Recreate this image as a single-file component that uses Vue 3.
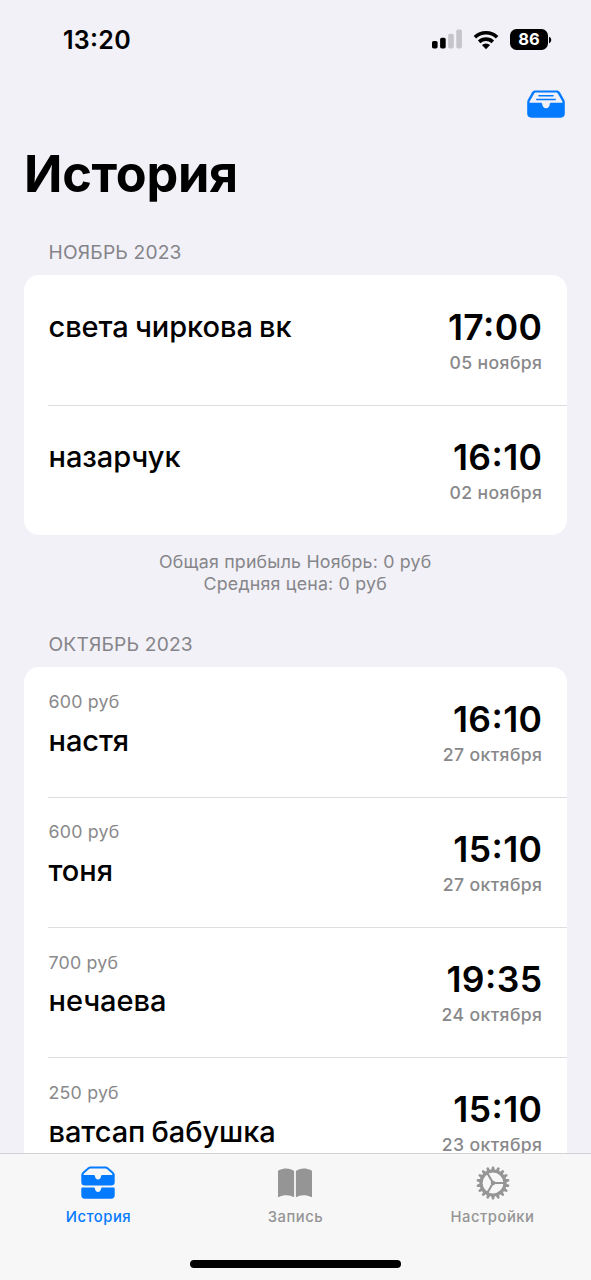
<script setup>
const sections = [
  {
    title: 'НОЯБРЬ 2023',
    rows: [
      { name: 'света чиркова вк', time: '17:00', date: '05 ноября' },
      { name: 'назарчук', time: '16:10', date: '02 ноября' },
    ],
    footer: ['Общая прибыль Ноябрь: 0 руб', 'Средняя цена: 0 руб'],
  },
  {
    title: 'ОКТЯБРЬ 2023',
    rows: [
      { price: '600 руб', name: 'настя', time: '16:10', date: '27 октября' },
      { price: '600 руб', name: 'тоня', time: '15:10', date: '27 октября' },
      { price: '700 руб', name: 'нечаева', time: '19:35', date: '24 октября' },
      { price: '250 руб', name: 'ватсап бабушка', time: '15:10', date: '23 октября' },
    ],
  },
]
const teeth = Array.from({ length: 18 }, (_, i) => i * 20)
</script>

<template>
  <div class="screen">
    <header class="status">
      <div class="clock">13:20</div>
      <div class="indicators">
        <svg class="signal" width="30" height="20" viewBox="0 0 30 20">
          <rect x="0" y="12" width="5.6" height="7.4" rx="1.6" />
          <rect x="8.1" y="8.8" width="5.6" height="10.6" rx="1.6" />
          <rect class="dim" x="16.2" y="4.7" width="5.6" height="14.7" rx="1.6" />
          <rect class="dim" x="24.3" y="0.6" width="5.6" height="18.8" rx="1.6" />
        </svg>
        <svg class="wifi" width="26" height="20" viewBox="0 0 26 20">
          <path class="arc" d="M1.9 7.3 A15.8 15.8 0 0 1 24.1 7.3" />
          <path class="arc" d="M6.2 11.9 A9.7 9.7 0 0 1 19.8 11.9" />
          <path d="M13 19.2 L8.9 15.1 A5.9 5.9 0 0 1 17.1 15.1 Z" />
        </svg>
        <div class="battery">86</div>
        <svg class="nub" width="3" height="8" viewBox="0 0 3 8"><path d="M0 0.8 C3 1.8 3 6.2 0 7.2 Z" /></svg>
      </div>
    </header>

    <div class="toolbar">
      <svg width="38" height="28" viewBox="0 0 38 28">
        <path fill="#047aff" d="M8.5 0.4 H29.5 C31 0.4 32 1 32.9 2.2 L37 9.6 C37.6 10.7 37.8 11.4 37.8 12.6 V23.6 C37.8 26.3 36.4 27.7 33.7 27.7 H4.3 C1.6 27.7 0.2 26.3 0.2 23.6 V12.6 C0.2 11.4 0.4 10.7 1 9.6 L5.1 2.2 C6 1 7 0.4 8.5 0.4 Z" />
        <path fill="#f2f1f7" d="M9.4 2.5 H28.6 C29.8 2.5 30.5 2.9 31.1 3.9 L35.4 11.5 C35.7 12.2 35.5 12.8 34.7 12.8 H24.3 C23.3 12.8 22.7 13.4 22.7 14.3 C22.7 16.6 21.3 18.3 19 18.3 C16.7 18.3 15.3 16.6 15.3 14.3 C15.3 13.4 14.7 12.8 13.7 12.8 H3.3 C2.5 12.8 2.3 12.2 2.6 11.5 L6.9 3.9 C7.5 2.9 8.2 2.5 9.4 2.5 Z" />
        <path fill="none" stroke="#047aff" stroke-width="1.6" stroke-linecap="round" d="M12 5.7 H26 M9.8 9.5 H28.2" />
      </svg>
    </div>

    <h1>История</h1>

    <main>
      <section v-for="s in sections" :key="s.title">
        <h2>{{ s.title }}</h2>
        <div class="card">
          <article v-for="r in s.rows" :key="r.name" class="row" :class="{ priced: r.price }">
            <div class="who">
              <div v-if="r.price" class="price">{{ r.price }}</div>
              <div class="name">{{ r.name }}</div>
            </div>
            <div class="when">
              <div class="time">{{ r.time }}</div>
              <div class="date">{{ r.date }}</div>
            </div>
          </article>
        </div>
        <footer v-if="s.footer">
          <div v-for="line in s.footer" :key="line">{{ line }}</div>
        </footer>
      </section>
    </main>

    <nav>
      <div class="tab active">
        <svg width="34" height="34" viewBox="0 0 34 34">
          <path fill="currentColor" d="M9.8 0.5 H24.2 C25.4 0.5 26.2 0.8 27.1 1.5 L32 5.8 C33.2 6.9 33.7 7.9 33.7 9.4 V16 C33.7 18.4 32.5 19.6 30.1 19.6 H3.9 C1.5 19.6 0.3 18.4 0.3 16 V9.4 C0.3 7.9 0.8 6.9 2 5.8 L6.9 1.5 C7.8 0.8 8.6 0.5 9.8 0.5 Z" />
          <path fill="#f7f7f7" d="M10 2.4 H24 C25 2.4 25.5 2.6 26.2 3.2 L31 7.4 C31.8 8.3 31.5 8.9 30.6 8.9 H21.5 C20.6 8.9 20.2 9.4 20.1 10.1 C19.8 12.3 18.7 13.5 17 13.5 C15.3 13.5 14.2 12.3 13.9 10.1 C13.8 9.4 13.4 8.9 12.5 8.9 H3.4 C2.5 8.9 2.2 8.3 3 7.4 L7.8 3.2 C8.5 2.6 9 2.4 10 2.4 Z" />
          <path fill="currentColor" d="M1.6 21.4 H12.6 C13.4 21.4 13.8 21.8 13.9 22.5 C14.2 24.8 15.3 26 17 26 C18.7 26 19.8 24.8 20.1 22.5 C20.2 21.8 20.6 21.4 21.4 21.4 H32.4 C33.3 21.4 33.7 21.8 33.7 22.7 V29 C33.7 31.5 32.5 32.8 30.1 32.8 H3.9 C1.5 32.8 0.3 31.5 0.3 29 V22.7 C0.3 21.8 0.7 21.4 1.6 21.4 Z" />
        </svg>
        <span>История</span>
      </div>
      <div class="tab">
        <svg width="34" height="34" viewBox="0 0 34 34">
          <path fill="currentColor" d="M16.1 5 V31.2 C11.8 28.6 5.4 28.4 0.9 31.1 C0.3 31.4 0 31.1 0 30.6 V6 C0 5 .3 4.6 1.2 4.1 C5.5 1.7 12.7 1.8 16.1 5 Z M17.9 5 C21.3 1.8 28.5 1.7 32.8 4.1 C33.7 4.6 34 5 34 6 V30.6 C34 31.1 33.7 31.4 33.1 31.1 C28.6 28.4 22.2 28.6 17.9 31.2 Z" />
        </svg>
        <span>Запись</span>
      </div>
      <div class="tab settings">
        <svg width="34" height="34" viewBox="0 0 34 34">
          <g fill="currentColor">
            <path v-for="a in teeth" :key="a" d="M15.2 4 L15.9 0.8 Q17 0 18.1 0.8 L18.8 4 Z" :transform="`rotate(${a} 17 17)`" />
          </g>
          <circle cx="17" cy="17" r="12" fill="none" stroke="currentColor" stroke-width="3.2" />
          <path fill="none" stroke="currentColor" stroke-width="2.1" d="M17 17 H29 M17 17 L11 6.6 M17 17 L11 27.4" />
          <circle cx="17" cy="17" r="2.3" fill="currentColor" />
        </svg>
        <span>Настройки</span>
      </div>
      <div class="home"></div>
    </nav>
  </div>
</template>

<style>
body { margin: 0; background: #f2f1f7; }
</style>

<style scoped>
.screen {
  width: 591px;
  height: 1280px;
  display: flex;
  flex-direction: column;
  overflow: hidden;
  background: #f2f1f7;
  color: #000;
  font-family: Inter, "Liberation Sans", sans-serif;
}
.status {
  flex: none;
  height: 79px;
  display: flex;
  align-items: center;
  justify-content: space-between;
  padding: 0 39px 0 63px;
  box-sizing: border-box;
}
.clock {
  font-size: 25px;
  font-weight: 600;
  line-height: 30px;
  letter-spacing: 0.3px;
  font-feature-settings: "case" 1;
}
.indicators { display: flex; align-items: center; }
.signal { margin-top: -1px; }
.dim { fill: #c6c5ca; }
.wifi { margin-left: 10.5px; }
.arc { fill: none; stroke: #000; stroke-width: 3.6; }
.battery {
  width: 38px;
  height: 21px;
  margin-left: 11.5px;
  border-radius: 6.5px;
  background: #000;
  color: #fff;
  font-size: 16.5px;
  font-weight: 700;
  line-height: 21px;
  text-align: center;
}
.nub { margin-left: 1px; }
.toolbar {
  flex: none;
  height: 50px;
  display: flex;
  align-items: center;
  justify-content: flex-end;
  padding-right: 26px;
}
h1 {
  flex: none;
  margin: 15px 0 1px 24px;
  font-size: 50.4px;
  font-weight: 700;
  line-height: 60px;
  letter-spacing: -0.25px;
}
main { flex: none; height: 948px; overflow: hidden; padding: 0 24.5px 0 24px; }
h2 {
  margin: 0 0 0 24.5px;
  padding-top: 36px;
  font-size: 19.2px;
  font-weight: 400;
  line-height: 23px;
  letter-spacing: 0.18px;
  color: #858489;
  padding-bottom: 10.7px;
}
.card { background: #fff; border-radius: 15px; overflow: hidden; }
.row {
  display: flex;
  justify-content: space-between;
  height: 130.3px;
  box-sizing: border-box;
  margin-left: 24px;
  padding: 0 24.5px 0 0.5px;
}
.row + .row { box-shadow: inset 0 1px #dedee0; }
.who { padding-top: 34px; }
.priced .who { padding-top: 24.6px; }
.price { font-size: 17.8px; line-height: 22px; letter-spacing: 0.2px; margin-bottom: 9.7px; color: #89898b; }
.name { font-size: 29px; font-weight: 500; line-height: 36px; letter-spacing: -0.06px; word-spacing: -1.5px; }
.when { text-align: right; padding-top: 31px; }
.time {
  font-size: 35.5px;
  font-weight: 600;
  line-height: 43px;
  letter-spacing: 0.4px;
  margin-right: -0.4px;
  font-feature-settings: "case" 1;
}
.date {
  font-size: 17.6px;
  font-weight: 450;
  line-height: 22px;
  letter-spacing: 0.4px;
  color: #88888a;
  margin: 3px -0.4px 0 0;
}
footer {
  height: 61.6px;
  padding-top: 16px;
  box-sizing: border-box;
  text-align: center;
  font-size: 17.8px;
  line-height: 21.6px;
  letter-spacing: 0.2px;
  color: #85858a;
}
nav {
  position: relative;
  flex: none;
  height: 127px;
  box-sizing: border-box;
  border-top: 1px solid #d2d2d4;
  background: #f7f7f7;
  display: flex;
}
.tab {
  flex: 1;
  display: flex;
  flex-direction: column;
  align-items: center;
  padding-top: 12px;
  color: #959595;
  font-size: 14.8px;
  font-weight: 450;
  line-height: 18px;
  letter-spacing: 0.5px;
}
.tab span { margin-top: 8px; }
.tab svg { margin-right: 1px; }
.tab.settings svg { margin-right: 0; }
.tab.active { color: #047aff; }
.home {
  position: absolute;
  left: 190px;
  bottom: 12px;
  width: 211px;
  height: 8px;
  border-radius: 4px;
  background: #000;
}
</style>
